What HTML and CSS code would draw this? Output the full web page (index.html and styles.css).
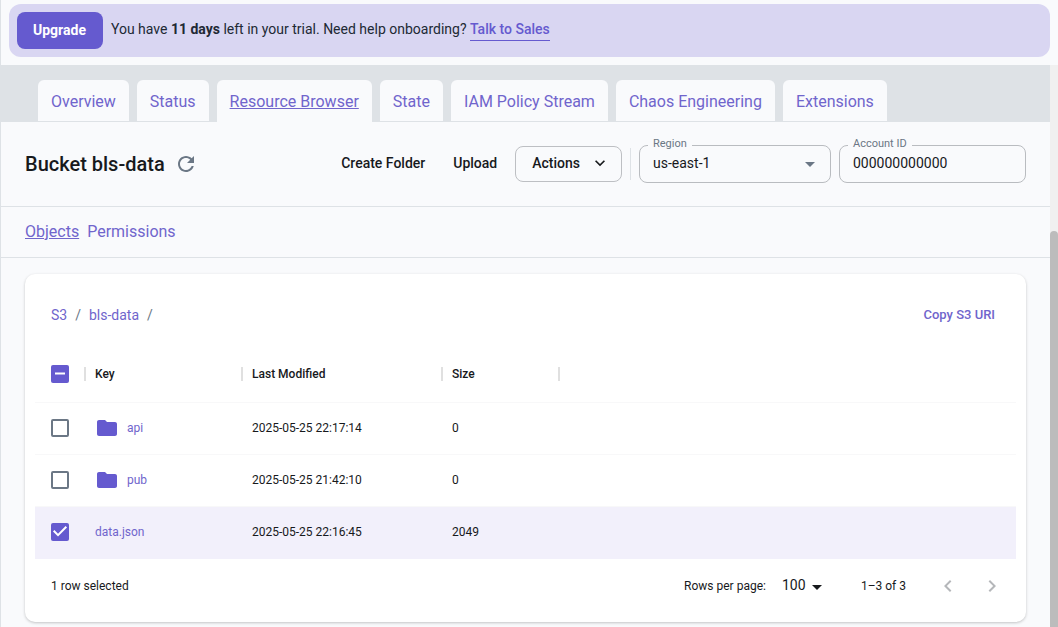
FILE: index.html
```html
<!DOCTYPE html>
<html lang="en">
<head>
<meta charset="utf-8">
<meta name="viewport" content="width=device-width, initial-scale=1">
<title>Bucket bls-data</title>
<link rel="stylesheet" href="styles.css">
</head>
<body class="app">
  <div class="banner-wrap">
    <div class="banner">
      <button class="upgrade" type="button">Upgrade</button>
      <p class="banner-text">You have <strong>11 days</strong> left in your trial. Need help onboarding? <a class="sales" href="#">Talk to Sales</a></p>
    </div>
  </div>
  <div class="viewport">
    <main class="page">
      <nav class="tabs" aria-label="Instance">
        <a class="tab" href="#">Overview</a>
        <a class="tab" href="#">Status</a>
        <a class="tab tab-active" href="#">Resource Browser</a>
        <a class="tab" href="#">State</a>
        <a class="tab" href="#">IAM Policy Stream</a>
        <a class="tab" href="#">Chaos Engineering</a>
        <a class="tab" href="#">Extensions</a>
      </nav>
      <header class="page-head">
        <h1 class="title">Bucket bls-data</h1>
        <button class="icon-btn refresh" type="button" aria-label="Refresh">
          <svg width="24" height="24" viewBox="0 0 24 24" fill="currentColor"><path d="M17.65 6.35C16.2 4.9 14.21 4 12 4c-4.42 0-7.99 3.58-7.99 8s3.57 8 7.99 8c3.73 0 6.84-2.55 7.73-6h-2.08c-.82 2.33-3.04 4-5.65 4-3.31 0-6-2.69-6-6s2.69-6 6-6c1.66 0 3.14.69 4.22 1.78L13 11h7V4l-2.35 2.35z"/></svg>
        </button>
        <div class="toolbar">
          <button class="text-btn" type="button">Create Folder</button>
          <button class="text-btn" type="button">Upload</button>
          <button class="text-btn outlined" type="button">Actions
            <svg width="20" height="20" viewBox="0 0 24 24" fill="currentColor"><path d="M7.41 8.59 12 13.17l4.59-4.58L18 10l-6 6-6-6 1.41-1.41z"/></svg>
          </button>
          <span class="rule"></span>
          <div class="field region">
            <label class="field-label" for="region">Region</label>
            <select class="field-input" id="region"><option>us-east-1</option></select>
            <svg class="field-arrow" width="24" height="24" viewBox="0 0 24 24" fill="currentColor"><path d="m7 10 5 5 5-5z"/></svg>
          </div>
          <div class="field account">
            <label class="field-label" for="account">Account ID</label>
            <input class="field-input" id="account" type="text" value="000000000000">
          </div>
        </div>
      </header>
      <nav class="subnav" aria-label="Bucket">
        <a class="sublink sublink-active" href="#">Objects</a>
        <a class="sublink" href="#">Permissions</a>
      </nav>
      <section class="card">
        <div class="card-head">
          <nav class="crumbs" aria-label="Breadcrumb">
            <a class="link" href="#">S3</a><span>/</span><a class="link" href="#">bls-data</a><span>/</span>
          </nav>
          <button class="copy" type="button">Copy S3 URI</button>
        </div>
        <table class="grid">
          <colgroup><col class="c-check"><col class="c-key"><col class="c-date"><col class="c-size"><col></colgroup>
          <thead>
            <tr>
              <th class="sep"><input class="check partial" type="checkbox" aria-label="Select all rows"></th>
              <th class="sep">Key</th>
              <th class="sep">Last Modified</th>
              <th class="sep">Size</th>
              <th></th>
            </tr>
          </thead>
          <tbody>
            <tr>
              <td><input class="check" type="checkbox" aria-label="Select api"></td>
              <td><a class="link folder" href="#"><svg width="24" height="24" viewBox="0 0 24 24" fill="currentColor"><path d="M10 4H4c-1.1 0-1.99.9-1.99 2L2 18c0 1.1.9 2 2 2h16c1.1 0 2-.9 2-2V8c0-1.1-.9-2-2-2h-8l-2-2z"/></svg>api</a></td>
              <td>2025-05-25 22:17:14</td><td>0</td><td></td>
            </tr>
            <tr>
              <td><input class="check" type="checkbox" aria-label="Select pub"></td>
              <td><a class="link folder" href="#"><svg width="24" height="24" viewBox="0 0 24 24" fill="currentColor"><path d="M10 4H4c-1.1 0-1.99.9-1.99 2L2 18c0 1.1.9 2 2 2h16c1.1 0 2-.9 2-2V8c0-1.1-.9-2-2-2h-8l-2-2z"/></svg>pub</a></td>
              <td>2025-05-25 21:42:10</td><td>0</td><td></td>
            </tr>
            <tr class="selected">
              <td><input class="check" type="checkbox" checked aria-label="Select data.json"></td>
              <td><a class="link" href="#">data.json</a></td>
              <td>2025-05-25 22:16:45</td><td>2049</td><td></td>
            </tr>
          </tbody>
        </table>
        <footer class="card-foot">
          <span>1 row selected</span>
          <div class="pager">
            <label for="rows">Rows per page:</label>
            <div class="rows">
              <select class="rows-select" id="rows"><option>100</option></select>
              <svg class="rows-arrow" width="24" height="24" viewBox="0 0 24 24" fill="currentColor"><path d="m7 10 5 5 5-5z"/></svg>
            </div>
            <span class="range">1–3 of 3</span>
            <button class="icon-btn page-btn" type="button" disabled aria-label="Previous page"><svg width="24" height="24" viewBox="0 0 24 24" fill="currentColor"><path d="M15.41 7.41 14 6l-6 6 6 6 1.41-1.41L10.83 12z"/></svg></button>
            <button class="icon-btn page-btn" type="button" disabled aria-label="Next page"><svg width="24" height="24" viewBox="0 0 24 24" fill="currentColor"><path d="M10 6 8.59 7.41 13.17 12l-4.58 4.59L10 18l6-6z"/></svg></button>
          </div>
        </footer>
      </section>
    </main>
    <div class="scrollbar" aria-hidden="true"><div class="thumb"></div></div>
  </div>
</body>
</html>
```
FILE: styles.css
```css
* { box-sizing: border-box; }

.app {
  --brand: #655acf;
  --link: #7065cc;
  --ink: #17191c;
  --muted: #6b7785;
  --line: #dee2e6;
  --page: #f9fafc;
  margin: 0;
  height: 100vh;
  display: flex;
  flex-direction: column;
  overflow: hidden;
  border-left: 1px solid var(--line);
  background: var(--page);
  color: var(--ink);
  font: 14px/20px Roboto, "Liberation Sans", sans-serif;
}

button, select, input { font: inherit; color: inherit; }
button { border: 0; background: none; padding: 0; cursor: pointer; }
a { color: inherit; text-decoration: none; }

.banner-wrap { padding: 4px 8px 8px; }
.banner {
  display: flex;
  align-items: center;
  gap: 8px;
  padding: 8px;
  border-radius: 12px;
  background: #d9d6f2;
}
.upgrade {
  padding: 8px 17px 9px 16px;
  border-radius: 8px;
  background: var(--brand);
  color: #fff;
  font-weight: 700;
}
.banner-text { margin: 0; padding-bottom: 2px; color: #212934; }
.sales {
  display: inline-block;
  padding-bottom: 1px;
  border-bottom: 1px solid var(--brand);
  color: var(--brand);
  font-weight: 500;
}

.viewport { flex: 1; min-height: 0; display: flex; }
.page { flex: 1; min-width: 0; overflow: hidden; }
.scrollbar { width: 8px; padding-top: 166px; background: #f0f0f0; display: flex; }
.thumb { flex: 1; border-radius: 4px 4px 0 0; background: #bcbcbc; }

.tabs {
  display: flex;
  gap: 8px;
  padding: 15px 37px 0;
  background: var(--line);
}
.tab {
  padding: 10px 13px 7px 12px;
  border-bottom: 1px solid var(--line);
  border-radius: 6px 6px 0 0;
  background: var(--page);
  color: var(--link);
  font-size: 16px;
  line-height: 24px;
}
.tab { padding-left: 13px; }
.tab-active { border-bottom-color: var(--page); text-decoration: underline; }

.page-head {
  display: flex;
  align-items: center;
  padding: 23px 24px;
  border-bottom: 1px solid var(--line);
}
.title { margin: 0; font-size: 20px; line-height: 32px; font-weight: 500; }
.icon-btn { display: flex; color: var(--muted); }
.refresh { margin-left: 9px; }
.toolbar { margin-left: auto; display: flex; align-items: center; }
.text-btn {
  display: flex;
  align-items: center;
  gap: 10px;
  padding: 7px 14px 9px;
  font-weight: 500;
}
.outlined {
  margin-left: 4px;
  padding: 6px 11px 8px 16px;
  border: 1px solid #bdbfc3;
  border-radius: 8px;
}
.rule { width: 1px; height: 32px; margin: 0 8px; background: var(--line); }
.field { position: relative; height: 38px; }
.field + .field { margin-left: 8px; }
.region { width: 192px; }
.account { width: 187px; }
.field-label {
  position: absolute;
  top: -7px;
  left: 9px;
  padding: 0 5px;
  background: var(--page);
  color: var(--muted);
  font-size: 11px;
  line-height: 12px;
}
.field-input {
  width: 100%;
  height: 100%;
  padding: 0 13px 2px;
  border: 1px solid #b9bcc0;
  border-radius: 8px;
  background: transparent;
  appearance: none;
}
.field-arrow, .rows-arrow { position: absolute; pointer-events: none; }
.field-arrow { top: 7px; right: 9px; color: var(--muted); }

.subnav {
  display: flex;
  gap: 8px;
  padding: 13px 24px;
  border-bottom: 1px solid var(--line);
  color: var(--link);
  font-size: 16px;
  line-height: 24px;
}
.sublink-active { text-decoration: underline; }

.card {
  margin: 16px 24px 24px;
  padding: 11px 10px 10px;
  border-radius: 10px;
  background: #fff;
  box-shadow: 0 1px 3px rgba(0, 0, 0, .22);
  font-size: 12px;
}
.card-head {
  display: flex;
  align-items: center;
  justify-content: space-between;
  height: 60px;
  padding: 0 21px 0 16px;
}
.crumbs { display: flex; gap: 8px; color: var(--muted); font-size: 14px; }
.link { color: var(--link); }
.copy { color: var(--link); font-size: 13px; font-weight: 500; }

.grid { width: 100%; table-layout: fixed; border-collapse: separate; border-spacing: 0; }
.c-check { width: 50px; }
.c-key { width: 157px; }
.c-date { width: 200px; }
.c-size { width: 117px; }
.grid th, .grid td {
  height: 52px;
  padding: 0 10px 2px;
  border-bottom: 1px solid #f8f8f9;
  text-align: left;
  vertical-align: middle;
}
.grid th { height: 58px; padding-bottom: 0; font-weight: 500; position: relative; }
.grid th:first-child, .grid td:first-child { padding-left: 16px; padding-right: 0; }
.sep::after {
  content: "";
  position: absolute;
  top: 22px;
  right: -1px;
  width: 2px;
  height: 14px;
  background: #e0e0e0;
}
.selected td { background: #f2f0fb; border-bottom-color: #f2f0fb; }
.folder { display: flex; align-items: center; gap: 8px; }
.folder svg { color: var(--brand); }

.check {
  display: block;
  width: 18px;
  height: 18px;
  margin: 0;
  border: 2px solid var(--muted);
  border-radius: 2px;
  appearance: none;
}
.check:checked, .partial { border: 0; background: var(--brand); }
.check:checked::before, .partial::before {
  content: "";
  display: block;
  width: 18px;
  height: 18px;
  background: #fff;
}
.check:checked::before { clip-path: polygon(39% 78%, 11% 50%, 19% 42%, 39% 62%, 81% 20%, 89% 28%); }
.partial::before { clip-path: inset(8px 4px); }

.card-foot {
  display: flex;
  align-items: center;
  justify-content: space-between;
  height: 53px;
  padding: 0 12px 0 16px;
}
.pager { display: flex; align-items: center; }
.rows { position: relative; margin-left: 16px; }
.rows-select {
  display: block;
  width: 47px;
  padding: 0 22px 2px 0;
  border: 0;
  background: transparent;
  appearance: none;
  font-size: 14px;
}
.rows-arrow { top: 0; right: 0; }
.range { margin: 0 30px 0 32px; }
.page-btn { color: #b5b7ba; }
.page-btn + .page-btn { margin-left: 20px; }
```
